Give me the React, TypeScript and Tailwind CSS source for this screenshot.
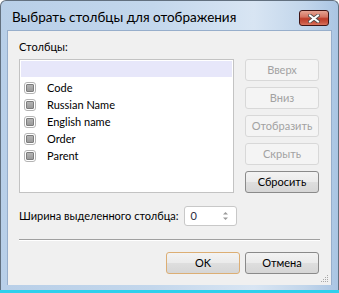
import React from "react";

const rows = ["Code", "Russian Name", "English name", "Order", "Parent"];
const sideButtons = [
  { label: "Вверх", enabled: false },
  { label: "Вниз", enabled: false },
  { label: "Отобразить", enabled: false },
  { label: "Скрыть", enabled: false },
  { label: "Сбросить", enabled: true },
];

function Check() {
  return (
    <span className="flex h-[12px] w-[12px] items-center justify-center rounded-[3px] border border-[#b4b4b4] bg-white">
      <span className="h-[8px] w-[8px] rounded-[1px] border border-[#7d7d7d] bg-[linear-gradient(#b4b4b4,#9a9a9a)]" />
    </span>
  );
}

function Btn({ label, enabled = true, accent = false }: { label: string; enabled?: boolean; accent?: boolean }) {
  if (!enabled) {
    return (
      <div className="flex h-[22px] w-[74px] items-center justify-center rounded-[3px] border border-[#d8d8d8] bg-[#f4f4f4] text-[#a2a2a2]">
        {label}
      </div>
    );
  }
  return (
    <div
      className={
        "flex h-[22px] w-[74px] items-center justify-center rounded-[3px] border bg-[linear-gradient(#f3f3f3_0%,#ebebeb_48%,#dedede_52%,#d6d6d6_100%)] text-black " +
        (accent ? "border-[#dcae74]" : "border-[#8a8a8a]")
      }
    >
      {label}
    </div>
  );
}

export default function App() {
  return (
    <div
      className="relative h-[293px] w-[339px] overflow-hidden bg-white text-[11px] leading-[14px] text-black"
      style={{ fontFamily: "Lato, 'Noto Sans', sans-serif" }}
    >
      <div className="flex h-[290px] w-[339px] flex-col rounded-t-[6px] border border-b-0 border-[#62707f] bg-[linear-gradient(90deg,#b8cfe8_0%,#c3d7ec_45%,#d8e5f3_75%,#c2d6eb_90%,#aac5e3_100%)] px-[6px]">
        {/* заголовок */}
        <div className="flex h-[29px] items-center justify-between">
          <span className="pl-[5px] pt-[2px] text-[13.5px] text-black">Выбрать столбцы для отображения</span>
          <div className="mr-[3px] mt-[5px] flex h-[16px] w-[30px] items-center justify-center rounded-[3px] border border-[#3f1414] bg-[linear-gradient(#e6a493_0%,#d57462_42%,#bd3c29_55%,#c8533f_80%,#d9745f_100%)]">
            <svg width="12" height="9" viewBox="0 0 12 9" aria-hidden>
              <path d="M2 1.5 L10 7.5 M10 1.5 L2 7.5" stroke="#4b4b4b" strokeWidth="3.6" strokeLinecap="square" />
              <path d="M2 1.5 L10 7.5 M10 1.5 L2 7.5" stroke="#ffffff" strokeWidth="2" strokeLinecap="square" />
            </svg>
          </div>
        </div>

        {/* клиентская область */}
        <div className="relative flex flex-1 flex-col border border-b-0 border-[#97aecb] bg-[#f0f0f0] px-[11px] pt-[9px]">
          <div className="h-[14px]">Столбцы:</div>
          <div className="mt-[5px] flex gap-[11px]">
            <div className="h-[134px] w-[215px] border border-[#c3c3c3] bg-white p-[1px]">
              <div className="h-[16px] bg-[#e7e7fa]" />
              <div className="mt-[2px] flex flex-col">
                {rows.map((r) => (
                  <div key={r} className="flex h-[17px] items-center pl-[3px]">
                    <Check />
                    <span className="ml-[11px]">{r}</span>
                  </div>
                ))}
              </div>
            </div>
            <div className="flex flex-col gap-[6px]">
              {sideButtons.map((b) => (
                <Btn key={b.label} label={b.label} enabled={b.enabled} />
              ))}
            </div>
          </div>

          <div className="mt-[13px] flex items-center gap-[5px]">
            <span>Ширина выделенного столбца:</span>
            <div className="flex h-[20px] w-[53px] items-center justify-between rounded-[3px] border border-[#c8c8c8] bg-white pl-[6px] pr-[7px]">
              <span className="text-[#2d2d3d]">0</span>
              <svg width="7" height="12" viewBox="0 0 7 12" aria-hidden>
                <path d="M3.5 2 L6 4.5 H1 Z" fill="#9a9a9a" />
                <path d="M3.5 10 L6 7.5 H1 Z" fill="#9a9a9a" />
              </svg>
            </div>
          </div>

          <div className="mt-[13px] h-[2px] border-t border-[#a0a0a0] bg-white" />

          <div className="mt-[11px] flex justify-end gap-[5px] pr-[1px]">
            <Btn label="OK" accent />
            <Btn label="Отмена" />
          </div>

          {/* ручка изменения размера */}
          <svg className="absolute bottom-[2px] right-[2px]" width="8" height="8" viewBox="0 0 8 8" aria-hidden>
            <rect x="6" y="0" width="1" height="1" fill="#a8a8a8" />
            <rect x="4" y="2" width="1" height="1" fill="#a8a8a8" />
            <rect x="6" y="2" width="1" height="1" fill="#a8a8a8" />
            <rect x="2" y="4" width="1" height="1" fill="#a8a8a8" />
            <rect x="4" y="4" width="1" height="1" fill="#a8a8a8" />
            <rect x="6" y="4" width="1" height="1" fill="#a8a8a8" />
            <rect x="0" y="6" width="1" height="1" fill="#a8a8a8" />
            <rect x="2" y="6" width="1" height="1" fill="#a8a8a8" />
            <rect x="4" y="6" width="1" height="1" fill="#a8a8a8" />
            <rect x="6" y="6" width="1" height="1" fill="#a8a8a8" />
          </svg>
        </div>
        <div className="h-[5px]" />
      </div>
      <div className="h-[3px] bg-[#2fd0ec]" />
    </div>
  );
}
